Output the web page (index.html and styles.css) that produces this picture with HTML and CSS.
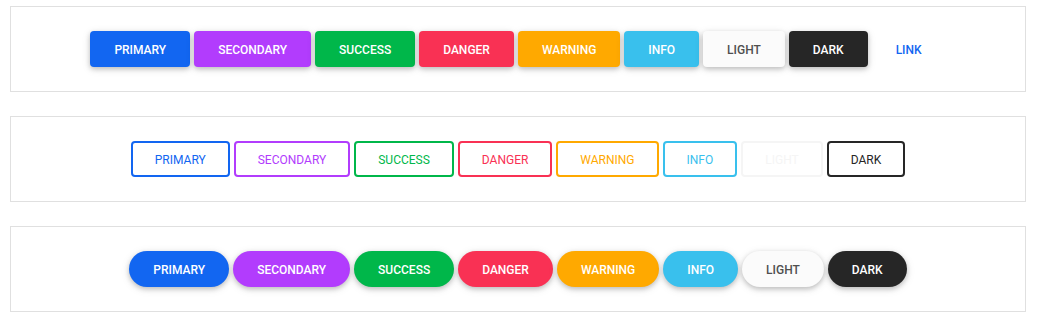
FILE: index.html
```html
<!DOCTYPE html>
<html>
<head>
<meta charset="utf-8">
<link rel="stylesheet" href="styles.css">
</head>
<body>
<div class="page">
  <div class="box">
    <button class="btn btn-primary">Primary</button>
    <button class="btn btn-secondary">Secondary</button>
    <button class="btn btn-success">Success</button>
    <button class="btn btn-danger">Danger</button>
    <button class="btn btn-warning">Warning</button>
    <button class="btn btn-info">Info</button>
    <button class="btn btn-light">Light</button>
    <button class="btn btn-dark">Dark</button>
    <button class="btn btn-link">Link</button>
  </div>
  <div class="box">
    <button class="btn btn-outline ol-primary">Primary</button>
    <button class="btn btn-outline ol-secondary">Secondary</button>
    <button class="btn btn-outline ol-success">Success</button>
    <button class="btn btn-outline ol-danger">Danger</button>
    <button class="btn btn-outline ol-warning">Warning</button>
    <button class="btn btn-outline ol-info">Info</button>
    <button class="btn btn-outline ol-light">Light</button>
    <button class="btn btn-outline ol-dark">Dark</button>
  </div>
  <div class="box">
    <button class="btn btn-rounded btn-primary">Primary</button>
    <button class="btn btn-rounded btn-secondary">Secondary</button>
    <button class="btn btn-rounded btn-success">Success</button>
    <button class="btn btn-rounded btn-danger">Danger</button>
    <button class="btn btn-rounded btn-warning">Warning</button>
    <button class="btn btn-rounded btn-info">Info</button>
    <button class="btn btn-rounded btn-light">Light</button>
    <button class="btn btn-rounded btn-dark">Dark</button>
  </div>
</div>
</body>
</html>
```

FILE: styles.css
```css
* { box-sizing: border-box; }
body {
  margin: 0;
  background: #fff;
  font-family: Roboto, "Liberation Sans", sans-serif;
}
.page {
  padding: 6px 19px 0 10px;
  display: flex;
  flex-direction: column;
  gap: 24px;
}
.box {
  border: 1px solid #e0e0e0;
  padding: 24px 0;
  display: flex;
  justify-content: center;
  gap: 4px;
}
.btn {
  font-family: Roboto, "Liberation Sans", sans-serif;
  font-size: 12px;
  font-weight: 500;
  text-transform: uppercase;
  line-height: 18px;
  height: 36px;
  padding: 10px 24px 8px;
  border: 0;
  border-radius: 4px;
  color: #fff;
  cursor: pointer;
  box-shadow: 0 2px 5px 0 rgba(0,0,0,.2), 0 2px 10px 0 rgba(0,0,0,.1);
}
.btn-rounded { border-radius: 10rem; }
.btn-primary { background: #1266f1; }
.btn-secondary { background: #b23cfd; }
.btn-success { background: #00b74a; }
.btn-danger { background: #f93154; }
.btn-warning { background: #ffa900; }
.btn-info { background: #39c0ed; }
.btn-light { background: #fbfbfb; color: #4f4f4f; }
.btn-dark { background: #262626; }
.btn-link { background: transparent; color: #1266f1; box-shadow: none; }

.btn-outline {
  background: transparent;
  border: 2px solid;
  padding: 8px 22px 6px;
  font-weight: 400;
  box-shadow: none;
}
.ol-primary { color: #1266f1; border-color: #1266f1; }
.ol-secondary { color: #b23cfd; border-color: #b23cfd; }
.ol-success { color: #00b74a; border-color: #00b74a; }
.ol-danger { color: #f93154; border-color: #f93154; }
.ol-warning { color: #ffa900; border-color: #ffa900; }
.ol-info { color: #39c0ed; border-color: #39c0ed; }
.ol-light { color: #f5f5f5; border-color: #f5f5f5; }
.ol-dark { color: #262626; border-color: #262626; }
```
